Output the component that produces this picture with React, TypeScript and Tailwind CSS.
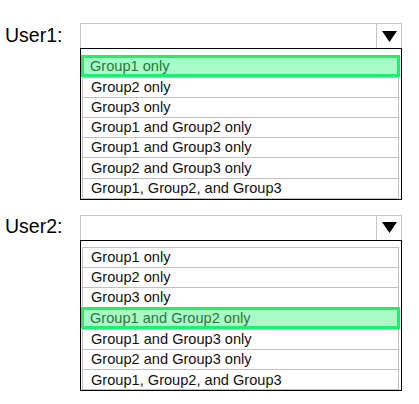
import React from "react";

const options = [
  "Group1 only",
  "Group2 only",
  "Group3 only",
  "Group1 and Group2 only",
  "Group1 and Group3 only",
  "Group2 and Group3 only",
  "Group1, Group2, and Group3",
];

function Block({ label, selected }: { label: string; selected: number }) {
  return (
    <div className="flex">
      <div className="w-[80px] pl-[5px] h-[25px] flex items-center text-[19.5px] text-black leading-none">
        {label}
      </div>
      <div className="w-[322px] flex flex-col">
        <div className="h-[25px] border border-[#c6c6c6] border-b-0 flex justify-end bg-white">
          <div className="w-[25px] border-l border-[#c6c6c6] flex items-center justify-center">
            <svg width="15" height="11" viewBox="0 0 15 11">
              <polygon points="0,0 15,0 7.5,11" fill="#000" />
            </svg>
          </div>
        </div>
        <div className="border border-black pt-[6px] pb-0 pl-px pr-[2px] bg-white">
          <div className="border-b border-[#c0c0c0]">
            {options.map((o, i) =>
              i === selected ? (
                <div
                  key={o}
                  className="h-[21.6px] -mx-px border-[3px] border-[#1ef06c] bg-[#a8fac6] text-[#1f7a41] pl-[6px] flex items-center text-[14.6px] leading-none"
                >
                  {o}
                </div>
              ) : (
                <div
                  key={o}
                  className="h-[20.2px] border-t border-x border-[#c0c0c0] pl-[8px] flex items-center text-[14.6px] leading-none text-[#111]"
                >
                  {o}
                </div>
              )
            )}
          </div>
        </div>
      </div>
    </div>
  );
}

export default function App() {
  return (
    <div
      className="w-[419px] h-[404px] bg-white pt-[23px] flex flex-col gap-[15px]"
      style={{ fontFamily: '"Liberation Sans", Arial, sans-serif' }}
    >
      <Block label="User1:" selected={0} />
      <Block label="User2:" selected={3} />
    </div>
  );
}
